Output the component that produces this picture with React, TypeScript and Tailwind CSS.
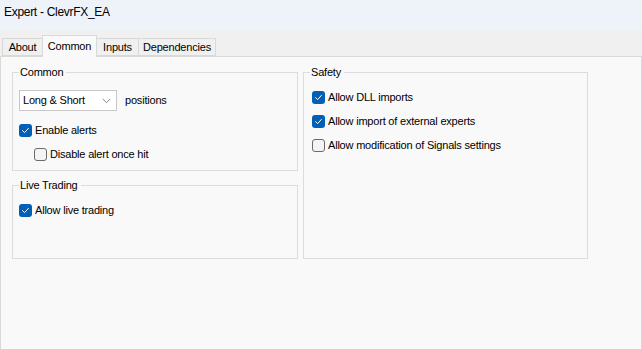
import React from "react";

function Check({ checked }: { checked: boolean }) {
  return checked ? (
    <span className="flex h-[13px] w-[13px] shrink-0 items-center justify-center rounded-[3px] bg-[#005fb8]">
      <svg width="9" height="9" viewBox="0 0 9 9" fill="none">
        <path d="M1.6 4.7 L3.6 6.6 L7.4 2.4" stroke="#ffffff" strokeWidth="1" strokeLinecap="round" strokeLinejoin="round" />
      </svg>
    </span>
  ) : (
    <span className="h-[13px] w-[13px] shrink-0 rounded-[3px] border border-[#6b6b6b] bg-[#f4f4f4]" />
  );
}

function CheckRow({ checked, label, className = "" }: { checked: boolean; label: string; className?: string }) {
  return (
    <div className={"flex h-[13px] items-center gap-[3px] " + className}>
      <Check checked={checked} />
      <span className="leading-[13px]">{label}</span>
    </div>
  );
}

function Group({ title, children, className = "" }: { title: string; children: React.ReactNode; className?: string }) {
  return (
    <fieldset className={"border border-[#dcdcdc] px-[6px] " + className}>
      <legend className="pl-[1px] pr-[3px] leading-[14px]">{title}</legend>
      {children}
    </fieldset>
  );
}

export default function App() {
  const tabs: { t: string; w: string }[] = [
    { t: "About", w: "w-[40px]" },
    { t: "Common", w: "w-[55px]" },
    { t: "Inputs", w: "w-[41px]" },
    { t: "Dependencies", w: "w-[78px]" },
  ];
  return (
    <div
      className="flex h-[349px] w-[642px] flex-col overflow-hidden text-[11px] tracking-[-0.2px] text-black"
      style={{ fontFamily: '"Liberation Sans", Arial, sans-serif' }}
    >
      <div className="flex h-[30px] items-center bg-[#eef3f9] pl-[4px] pb-[6px] text-[12px] tracking-[-0.3px]">Expert - ClevrFX_EA</div>
      <div className="flex h-[26px] items-end bg-[#f0f0f0] pl-[2px]">
        {tabs.map(({ t, w }, i) =>
          t === "Common" ? (
            <div
              key={t}
              className={"relative z-10 -mb-px flex h-[22px] items-center justify-center border border-b-0 border-[#d9d9d9] bg-[#f9f9f9] leading-none " + w}
            >
              {t}
            </div>
          ) : (
            <div
              key={t}
              className={
                "flex h-[18px] items-center justify-center border border-[#d9d9d9] bg-[#f0f0f0] leading-none " +
                w +
                (i === 0 ? " border-r-0" : i === 2 ? " border-l-0 border-r-0" : "")
              }
            >
              {t}
            </div>
          )
        )}
      </div>
      <div className="flex flex-1 gap-[5px] border border-b-0 border-[#d9d9d9] bg-[#f9f9f9] pl-[11px] pt-[8px]">
        <div className="flex w-[286px] flex-col gap-[7px]">
          <Group title="Common" className="pb-[9px]">
            <div className="mt-[11px] flex items-center gap-[8px]">
              <div className="flex h-[21px] w-[98px] items-center justify-between border border-[#c8c8c8] bg-white pl-[3px] pr-[5px]">
                <span>Long &amp; Short</span>
                <svg width="9" height="6" viewBox="0 0 9 6" fill="none">
                  <path d="M0.8 1 L4.5 4.7 L8.2 1" stroke="#666" strokeWidth="0.8" />
                </svg>
              </div>
              <span>positions</span>
            </div>
            <CheckRow checked label="Enable alerts" className="mt-[13px]" />
            <CheckRow checked={false} label="Disable alert once hit" className="ml-[15px] mt-[11px]" />
          </Group>
          <Group title="Live Trading" className="h-[81px]">
            <CheckRow checked label="Allow live trading" className="mt-[12px]" />
          </Group>
        </div>
        <div className="flex w-[285px] flex-col">
          <Group title="Safety" className="h-[194px]">
            <CheckRow checked label="Allow DLL imports" className="mt-[12px] ml-[2px]" />
            <CheckRow checked label="Allow import of external experts" className="mt-[11px] ml-[2px]" />
            <CheckRow checked={false} label="Allow modification of Signals settings" className="mt-[11px] ml-[2px]" />
          </Group>
        </div>
      </div>
    </div>
  );
}
